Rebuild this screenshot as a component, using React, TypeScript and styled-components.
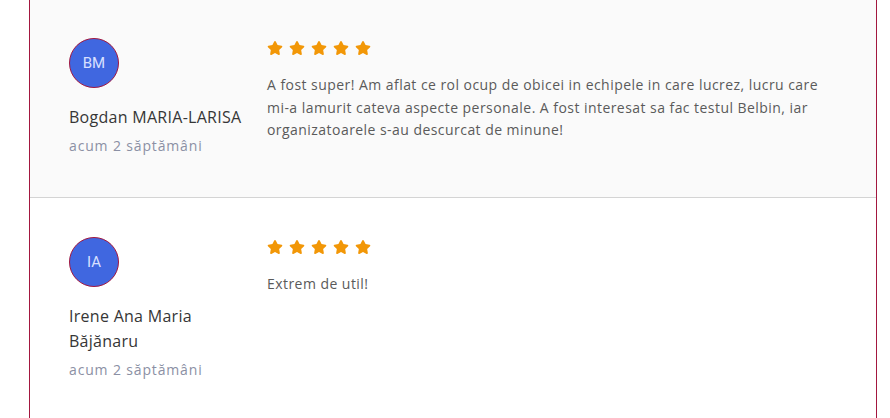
import React from "react";
import styled, { createGlobalStyle } from "styled-components";

const Global = createGlobalStyle`
  html, body { margin: 0; padding: 0; background: #ffffff; }
  body { font-family: "Open Sans", "Liberation Sans", sans-serif; }
`;

const List = styled.div`
  width: 846px;
  margin: -1px 0 0 29px;
  border-left: 1px solid #a3173f;
  border-right: 1px solid #a3173f;
  min-height: 430px;
`;

const Card = styled.div<{ $shaded?: boolean }>`
  display: grid;
  grid-template-columns: 182px 1fr;
  column-gap: 16px;
  padding: 39px 40px 40px 39px;
  background: ${(p) => (p.$shaded ? "#fafafa" : "#ffffff")};
  border-bottom: 1px solid ${(p) => (p.$shaded ? "#d4d4d4" : "transparent")};
`;

const Author = styled.div`
  display: flex;
  flex-direction: column;
`;

const Avatar = styled.div`
  width: 48px;
  height: 48px;
  border-radius: 50%;
  background: #4067e0;
  border: 1px solid #a3173f;
  display: flex;
  align-items: center;
  justify-content: center;
  color: #d9e0ff;
  font-family: Roboto, "Liberation Sans", sans-serif;
  font-size: 15px;
`;

const Name = styled.div`
  margin-top: 17px;
  font-size: 16px;
  line-height: 25px;
  letter-spacing: 0.28px;
  color: #363636;
`;

const When = styled.div`
  margin-top: 5px;
  font-size: 14px;
  line-height: 22px;
  letter-spacing: 0.85px;
  color: #8b90a4;
`;

const Body = styled.div`
  display: flex;
  flex-direction: column;
`;

const Stars = styled.div`
  display: flex;
  align-items: center;
  gap: 6px;
  height: 20px;
`;

const Text = styled.p`
  margin: 16px 0 0;
  font-size: 14px;
  line-height: 22.5px;
  letter-spacing: 0.45px;
  color: #5a5a5a;
`;

const Star = () => (
  <svg width="16" height="14" viewBox="0 0 576 512" aria-hidden="true">
    <path
      fill="#f29707"
      d="M259.3 17.8L194 150.2 47.9 171.5c-26.2 3.8-36.7 36.1-17.7 54.6l105.7 103-25 145.5c-4.5 26.3 23.2 46 46.4 33.7L288 439.6l130.7 68.7c23.2 12.2 50.9-7.4 46.4-33.7l-25-145.5 105.7-103c19-18.5 8.5-50.8-17.7-54.6L382 150.2 316.7 17.8c-11.7-23.6-45.6-23.9-57.4 0z"
    />
  </svg>
);

type Review = { initials: string; name: string; when: string; text: string };

const reviews: Review[] = [
  {
    initials: "BM",
    name: "Bogdan MARIA-LARISA",
    when: "acum 2 săptămâni",
    text:
      "A fost super! Am aflat ce rol ocup de obicei in echipele in care lucrez, lucru care mi-a lamurit cateva aspecte personale. A fost interesat sa fac testul Belbin, iar organizatoarele s-au descurcat de minune!",
  },
  {
    initials: "IA",
    name: "Irene Ana Maria Băjănaru",
    when: "acum 2 săptămâni",
    text: "Extrem de util!",
  },
];

export default function App() {
  return (
    <>
      <Global />
      <List>
        {reviews.map((r, i) => (
          <Card key={r.initials} $shaded={i === 0}>
            <Author>
              <Avatar>{r.initials}</Avatar>
              <Name>{r.name}</Name>
              <When>{r.when}</When>
            </Author>
            <Body>
              <Stars>
                {[0, 1, 2, 3, 4].map((s) => (
                  <Star key={s} />
                ))}
              </Stars>
              <Text>{r.text}</Text>
            </Body>
          </Card>
        ))}
      </List>
    </>
  );
}
